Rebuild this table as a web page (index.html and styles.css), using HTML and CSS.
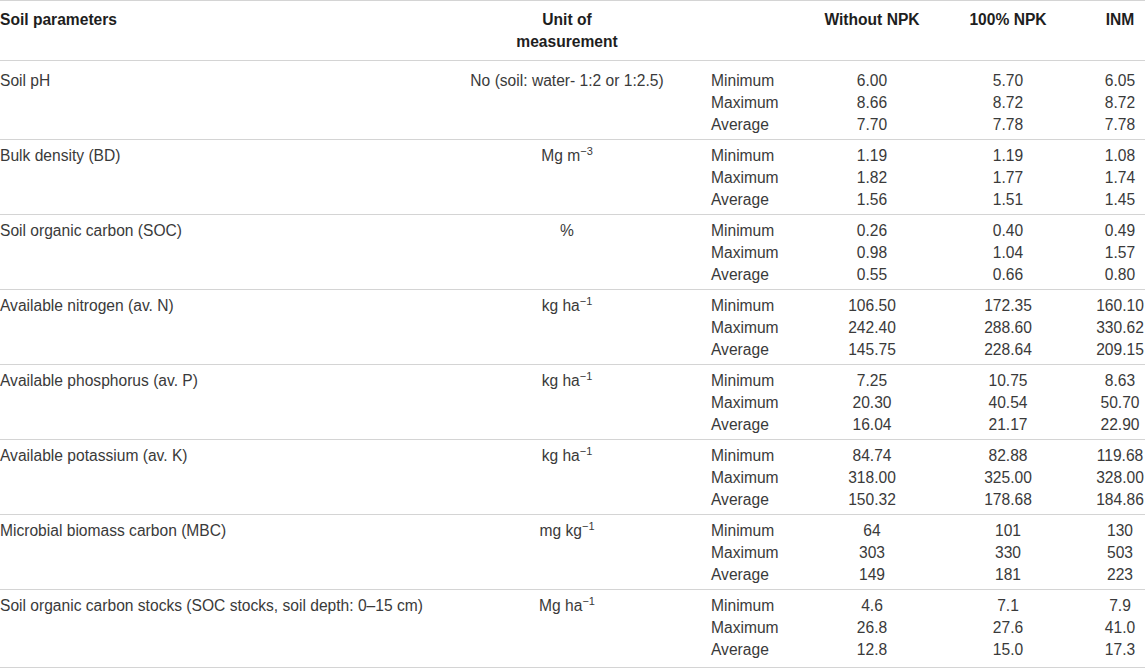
FILE: index.html
```html
<!DOCTYPE html>
<html lang="en">
<head>
<meta charset="utf-8">
<title>Soil parameters</title>
<link rel="stylesheet" href="styles.css">
</head>
<body>
<table class="data">
  <colgroup>
    <col class="c-param">
    <col class="c-unit">
    <col class="c-stat">
    <col class="c-wo">
    <col class="c-npk">
    <col class="c-inm">
  </colgroup>
  <thead>
    <tr>
      <th class="param">Soil parameters</th>
      <th class="unit">Unit of<br>measurement</th>
      <th class="stat"></th>
      <th class="num">Without NPK</th>
      <th class="num">100% NPK</th>
      <th class="num last">INM</th>
    </tr>
  </thead>
  <tbody>
    <tr>
      <td class="param">Soil pH</td>
      <td class="unit">No (soil: water- 1:2 or 1:2.5)</td>
      <td class="stat">Minimum<br>Maximum<br>Average</td>
      <td class="num">6.00<br>8.66<br>7.70</td>
      <td class="num">5.70<br>8.72<br>7.78</td>
      <td class="num last">6.05<br>8.72<br>7.78</td>
    </tr>
    <tr>
      <td class="param">Bulk density (BD)</td>
      <td class="unit">Mg m<sup class="sup">−3</sup></td>
      <td class="stat">Minimum<br>Maximum<br>Average</td>
      <td class="num">1.19<br>1.82<br>1.56</td>
      <td class="num">1.19<br>1.77<br>1.51</td>
      <td class="num last">1.08<br>1.74<br>1.45</td>
    </tr>
    <tr>
      <td class="param">Soil organic carbon (SOC)</td>
      <td class="unit">%</td>
      <td class="stat">Minimum<br>Maximum<br>Average</td>
      <td class="num">0.26<br>0.98<br>0.55</td>
      <td class="num">0.40<br>1.04<br>0.66</td>
      <td class="num last">0.49<br>1.57<br>0.80</td>
    </tr>
    <tr>
      <td class="param">Available nitrogen (av. N)</td>
      <td class="unit">kg ha<sup class="sup">−1</sup></td>
      <td class="stat">Minimum<br>Maximum<br>Average</td>
      <td class="num">106.50<br>242.40<br>145.75</td>
      <td class="num">172.35<br>288.60<br>228.64</td>
      <td class="num last">160.10<br>330.62<br>209.15</td>
    </tr>
    <tr>
      <td class="param">Available phosphorus (av. P)</td>
      <td class="unit">kg ha<sup class="sup">−1</sup></td>
      <td class="stat">Minimum<br>Maximum<br>Average</td>
      <td class="num">7.25<br>20.30<br>16.04</td>
      <td class="num">10.75<br>40.54<br>21.17</td>
      <td class="num last">8.63<br>50.70<br>22.90</td>
    </tr>
    <tr>
      <td class="param">Available potassium (av. K)</td>
      <td class="unit">kg ha<sup class="sup">−1</sup></td>
      <td class="stat">Minimum<br>Maximum<br>Average</td>
      <td class="num">84.74<br>318.00<br>150.32</td>
      <td class="num">82.88<br>325.00<br>178.68</td>
      <td class="num last">119.68<br>328.00<br>184.86</td>
    </tr>
    <tr>
      <td class="param">Microbial biomass carbon (MBC)</td>
      <td class="unit">mg kg<sup class="sup">−1</sup></td>
      <td class="stat">Minimum<br>Maximum<br>Average</td>
      <td class="num">64<br>303<br>149</td>
      <td class="num">101<br>330<br>181</td>
      <td class="num last">130<br>503<br>223</td>
    </tr>
    <tr>
      <td class="param">Soil organic carbon stocks (SOC stocks, soil depth: 0–15 cm)</td>
      <td class="unit">Mg ha<sup class="sup">−1</sup></td>
      <td class="stat">Minimum<br>Maximum<br>Average</td>
      <td class="num">4.6<br>26.8<br>12.8</td>
      <td class="num">7.1<br>27.6<br>15.0</td>
      <td class="num last">7.9<br>41.0<br>17.3</td>
    </tr>
  </tbody>
</table>
</body>
</html>
```
FILE: styles.css
```css
html, body {
  margin: 0;
  padding: 0;
  background: #ffffff;
}

.data {
  width: 1145px;
  table-layout: fixed;
  border-collapse: collapse;
  font-family: "Liberation Sans", Arial, sans-serif;
  font-size: 15.6px;
  line-height: 22px;
  color: #3a3a3a;
}

.c-param { width: 440px; }
.c-unit { width: 254px; }
.c-stat { width: 114px; }
.c-wo { width: 128px; }
.c-npk { width: 144px; }
.c-inm { width: 65px; }

.data th,
.data td {
  padding: 5px 0 3px 0;
  vertical-align: top;
}

.data thead tr {
  border-top: 1px solid #d4d4d4;
  border-bottom: 1px solid #d4d4d4;
}

.data thead th {
  padding-top: 8px;
  padding-bottom: 7px;
  font-weight: bold;
  color: #1e1e1e;
}

.data tbody tr {
  border-bottom: 1px solid #d4d4d4;
}

.data tbody tr:first-child td {
  padding-top: 9px;
}

.data tbody tr:last-child td {
  padding-bottom: 6px;
}

.param {
  text-align: left;
}

.unit {
  text-align: center;
}

.stat {
  text-align: left;
  padding-left: 17px !important;
}

.num {
  text-align: center;
}

.num.last {
  padding-left: 15px !important;
}

.sup {
  font-size: 11px;
  line-height: 0;
  vertical-align: 6px;
}
```
